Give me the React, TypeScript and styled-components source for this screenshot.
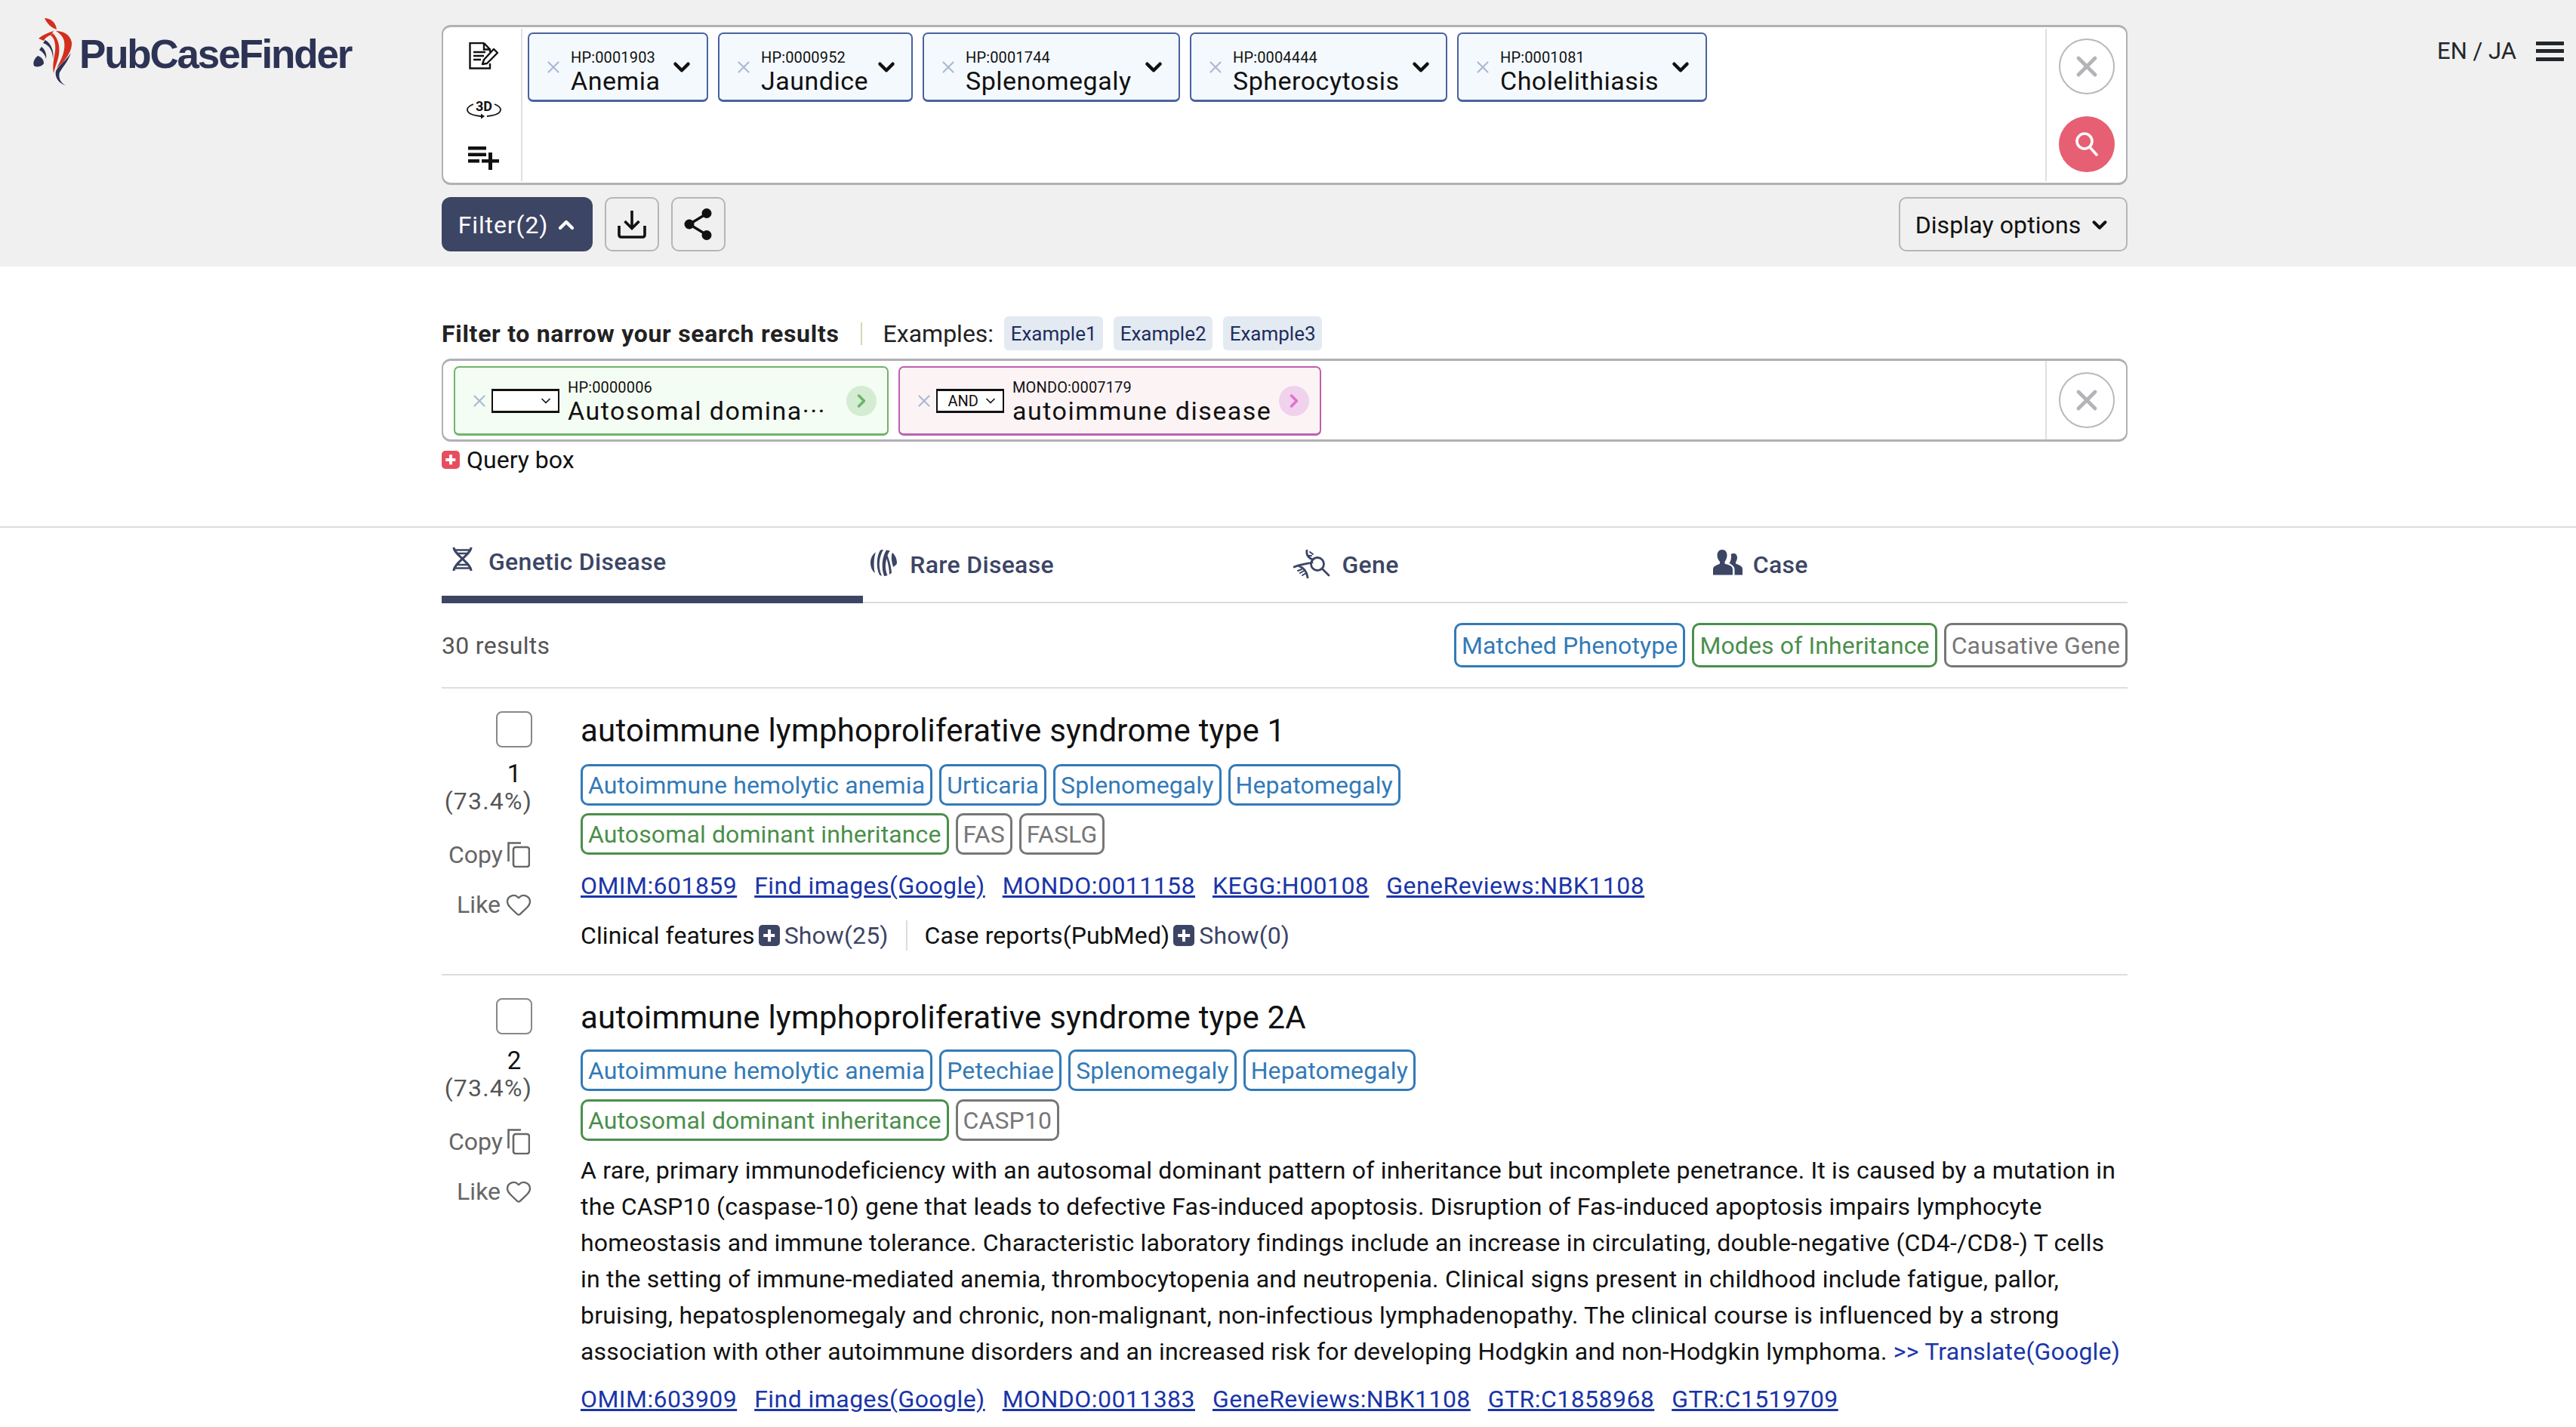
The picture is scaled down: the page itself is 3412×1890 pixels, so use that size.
import React from "react";
import styled, { createGlobalStyle } from "styled-components";
import { ChevronDown, ChevronUp, ChevronRight, X, Heart } from "lucide-react";

const FONT = `Roboto, "Noto Sans", sans-serif`;
const NAVY = "#3d4565";

const GlobalStyle = createGlobalStyle`
  html, body { margin: 0; padding: 0; background: #fff; }
  body { width: 3412px; height: 1890px; overflow: hidden; font-family: ${FONT}; font-size: 33px; color: #111; }
  * { box-sizing: border-box; }
`;

const Header = styled.header`
  display: flex;
  height: 353px;
  padding-top: 33px;
  background: #f0f0f0;
`;
const LogoSlot = styled.div`
  width: 585px;
  flex: none;
  display: flex;
  align-items: flex-start;
  padding: 0 0 0 44px;
  margin-top: -9px;
`;
const LogoText = styled.span`
  font-family: "Liberation Sans", sans-serif;
  font-weight: 700;
  font-size: 53px;
  letter-spacing: -2.2px;
  color: #2c3354;
  line-height: 62px;
  margin: 17px 0 0 9px;
`;
const SearchCol = styled.div`
  width: 2233px;
  flex: none;
`;
const SearchBox = styled.div`
  display: flex;
  height: 212px;
  background: #fff;
  border: solid #b0b0b5;
  border-width: 3px 2px;
  border-radius: 12px;
`;
const ToolCol = styled.div`
  width: 105px;
  flex: none;
  margin: 2px 0;
  border-right: 2px solid #e0e0e0;
  display: flex;
  flex-direction: column;
  align-items: center;
  justify-content: space-between;
  padding: 18px 0 14px 4px;
`;
const ChipArea = styled.div`
  flex: 1;
  display: flex;
  align-items: flex-start;
  gap: 13px;
  padding: 7px 0 0 7px;
`;
const ActionCol = styled.div`
  width: 107px;
  flex: none;
  margin: 2px 0;
  border-left: 2px solid #e0e0e0;
  display: flex;
  flex-direction: column;
  align-items: center;
  justify-content: space-between;
  padding: 13px 0 12px;
`;
const RoundButton = styled.div<{ $primary?: boolean }>`
  width: 74px;
  height: 74px;
  border-radius: 50%;
  display: flex;
  align-items: center;
  justify-content: center;
  background: ${(p) => (p.$primary ? "#e65f73" : "#fff")};
  border: ${(p) => (p.$primary ? "none" : "2px solid #b9b9bd")};
  color: #b4b4b8;
`;
const Chip = styled.div<{ $w: number; $border: string; $bg: string }>`
  width: ${(p) => p.$w}px;
  height: 92px;
  flex: none;
  display: flex;
  align-items: center;
  border: 2px solid ${(p) => p.$border};
  border-bottom-width: 3px;
  border-radius: 7px;
  background: ${(p) => p.$bg};
  padding-left: 19px;
`;
const ChipX = styled(X)`
  color: #adb9d3;
  flex: none;
`;
const ChipText = styled.div<{ $left: number; $top: number }>`
  margin-left: ${(p) => p.$left}px;
  margin-top: ${(p) => p.$top}px;
  flex: 1;
  min-width: 0;
`;
const ChipId = styled.div`
  font-size: 20px;
  line-height: 22px;
  letter-spacing: 0.15px;
`;
const ChipName = styled.div<{ $ls: number }>`
  font-size: 34px;
  line-height: 40px;
  letter-spacing: ${(p) => p.$ls}px;
  white-space: nowrap;
`;
const ChipChevron = styled(ChevronDown)`
  flex: none;
  margin-right: 16px;
  color: #111;
`;
const ToolRow = styled.div`
  display: flex;
  align-items: center;
  margin-top: 16px;
  height: 72px;
`;
const FilterButton = styled.div`
  width: 200px;
  height: 72px;
  padding: 2px 0 0 3px;
  border-radius: 12px;
  background: ${NAVY};
  color: #fff;
  display: flex;
  align-items: center;
  justify-content: center;
  gap: 8px;
  font-size: 32px;
  letter-spacing: 0.9px;
`;
const IconButton = styled.div`
  width: 72px;
  height: 72px;
  margin-left: 16px;
  border: 2px solid #b5b5ba;
  border-radius: 10px;
  display: flex;
  align-items: center;
  justify-content: center;
`;
const DisplayButton = styled.div`
  margin-left: auto;
  width: 303px;
  height: 72px;
  padding-top: 2px;
  border: 2px solid #b5b5ba;
  border-radius: 10px;
  display: flex;
  align-items: center;
  justify-content: center;
  gap: 10px;
  font-size: 32px;
  letter-spacing: 0.1px;
`;
const LangSlot = styled.div`
  flex: 1;
  display: flex;
  align-items: flex-start;
  justify-content: flex-end;
  gap: 26px;
  padding: 17px 16px 0 0;
  font-size: 31px;
  line-height: 36px;
  color: #23272b;
`;
const Burger = styled.div`
  width: 37px;
  height: 26px;
  margin-top: 5px;
  border-top: 5px solid #23272b;
  border-bottom: 5px solid #23272b;
  position: relative;
  &::after {
    content: "";
    position: absolute;
    left: 0;
    right: 0;
    top: 5px;
    height: 5px;
    background: #23272b;
  }
`;

const Main = styled.div`
  width: 2233px;
  margin-left: 585px;
`;
const FilterBand = styled.section`
  height: 346px;
  padding-top: 66px;
  border-bottom: 2px solid #ddd;
`;
const FilterHead = styled.div`
  display: flex;
  align-items: center;
  height: 45px;
`;
const FilterTitle = styled.div`
  font-weight: 700;
  font-size: 32px;
  color: #222;
  letter-spacing: 0.7px;
`;
const HeadSep = styled.div`
  width: 2px;
  height: 30px;
  margin: 0 28px;
  background: #cfdcae;
`;
const ExamplesLabel = styled.div`
  font-size: 32px;
  color: #222;
  margin-right: 14px;
`;
const ExampleChip = styled.div`
  width: 131px;
  height: 45px;
  margin-right: 14px;
  border-radius: 6px;
  background: #e3eaf2;
  color: #1f2d5c;
  font-size: 26px;
  display: flex;
  align-items: center;
  justify-content: center;
`;
const FilterBox = styled.div`
  display: flex;
  height: 110px;
  margin-top: 11px;
  border: solid #b0b0b5;
  border-width: 3px 2px;
  border-radius: 12px;
`;
const FilterChips = styled.div`
  flex: 1;
  display: flex;
  gap: 13px;
  padding: 7px 0 0 14px;
`;
const ClearCol = styled.div`
  width: 107px;
  flex: none;
  border-left: 2px solid #e0e0e0;
  display: flex;
  align-items: center;
  justify-content: center;
`;
const FakeSelect = styled.div`
  width: 90px;
  height: 32px;
  margin-left: 3px;
  flex: none;
  border: solid #111;
  border-width: 3px 2px;
  background: #fff;
  display: flex;
  align-items: center;
  justify-content: flex-end;
  gap: 6px;
  padding-right: 6px;
  font-size: 20px;
`;
const Circle = styled.div<{ $bg: string; $fg: string }>`
  width: 40px;
  height: 40px;
  flex: none;
  margin: 0 14px 0 10px;
  border-radius: 50%;
  background: ${(p) => p.$bg};
  color: ${(p) => p.$fg};
  display: flex;
  align-items: center;
  justify-content: center;
`;
const QueryRow = styled.div`
  display: flex;
  align-items: center;
  gap: 9px;
  margin-top: 4px;
  height: 40px;
  font-size: 32px;
`;
const PlusBox = styled.span<{ $bg: string; $size: number; $left?: number }>`
  width: ${(p) => p.$size}px;
  height: ${(p) => p.$size}px;
  margin-left: ${(p) => p.$left ?? 0}px;
  flex: none;
  border-radius: 5px;
  background: ${(p) => p.$bg};
  position: relative;
  display: inline-block;
  &::before, &::after {
    content: "";
    position: absolute;
    background: #fff;
    left: 50%;
    top: 50%;
    transform: translate(-50%, -50%);
  }
  &::before { width: 56%; height: 4px; }
  &::after { width: 4px; height: 56%; }
`;

const TabBar = styled.nav`
  display: flex;
  height: 100px;
  border-bottom: 2px solid #ddd;
`;
const Tab = styled.div<{ $active?: boolean; $pad: number; $gap: number }>`
  width: 25%;
  height: 100px;
  display: flex;
  align-items: flex-start;
  gap: ${(p) => p.$gap}px;
  padding: ${(p) => (p.$active ? "25px" : "29px")} 0 0 ${(p) => p.$pad}px;
  border-bottom: 10px solid ${(p) => (p.$active ? NAVY : "transparent")};
  color: ${NAVY};
  font-weight: 500;
  font-size: 32px;
  line-height: 40px;
  letter-spacing: 0.3px;
`;
const TabIcon = styled.svg`
  flex: none;
`;
const ResultsHead = styled.div`
  display: flex;
  align-items: center;
  justify-content: space-between;
  height: 113px;
  border-bottom: 2px solid #ddd;
  color: #555;
  font-size: 32px;
  letter-spacing: 0.3px;
`;
const LegendRow = styled.div`
  display: flex;
  gap: 9px;
`;
const Tag = styled.span<{ $color: string; $tall?: boolean }>`
  display: inline-flex;
  align-items: center;
  height: ${(p) => (p.$tall ? 59 : 55)}px;
  padding: 0 7px;
  border: 3px solid ${(p) => p.$color};
  border-radius: 10px;
  color: ${(p) => p.$color};
  font-size: 32px;
  white-space: nowrap;
  letter-spacing: 0.12px;
`;
const Result = styled.article<{ $last?: boolean }>`
  display: flex;
  padding-top: 30px;
  height: ${(p) => (p.$last ? "auto" : "380px")};
  border-bottom: ${(p) => (p.$last ? "none" : "2px solid #ddd")};
`;
const Side = styled.div`
  width: 184px;
  flex: none;
  padding-right: 64px;
  display: flex;
  flex-direction: column;
  align-items: flex-end;
`;
const CheckBox = styled.div`
  width: 48px;
  height: 48px;
  border: 2px solid #888;
  border-radius: 8px;
  background: #fff;
`;
const Rank = styled.div`
  width: 48px;
  text-align: center;
  margin-top: 16px;
  line-height: 37px;
  font-size: 33px;
`;
const Percent = styled.div`
  line-height: 36px;
  color: #555;
  font-size: 32px;
  letter-spacing: 1.2px;
`;
const SideAction = styled.div<{ $top: number }>`
  display: flex;
  align-items: center;
  gap: 6px;
  margin-top: ${(p) => p.$top}px;
  color: #666;
  font-size: 32px;
  line-height: 40px;
`;
const Content = styled.div`
  flex: 1;
  min-width: 0;
`;
const Title = styled.h2`
  margin: 0;
  font-weight: 400;
  font-size: 42px;
  line-height: 52px;
  letter-spacing: 0.2px;
  color: #111;
`;
const TagRow = styled.div<{ $top: number }>`
  display: flex;
  gap: 9px;
  margin-top: ${(p) => p.$top}px;
`;
const LinkRow = styled.div<{ $top: number }>`
  display: flex;
  gap: 23px;
  margin-top: ${(p) => p.$top}px;
  line-height: 48px;
`;
const ExtLink = styled.a`
  color: #1a35a8;
  text-decoration: underline;
  font-size: 32px;
  letter-spacing: 0.45px;
`;
const InfoRow = styled.div`
  display: flex;
  align-items: center;
  margin-top: 18px;
  height: 48px;
  font-size: 32px;
  letter-spacing: 0.1px;
`;
const ShowLink = styled.span`
  color: ${NAVY};
  margin-left: 6px;
`;
const InfoSep = styled.div`
  width: 2px;
  height: 40px;
  margin: 0 22px 0 24px;
  background: #ddd;
`;
const Summary = styled.p`
  margin: 15px 0 0;
  font-size: 32px;
  line-height: 48px;
  white-space: nowrap;
  letter-spacing: 0.2px;
`;
const Translate = styled.span`
  color: #1a35a8;
`;
const CopyGlyph = styled.svg`
  margin-right: 3px;
`;

function Logo() {
  return (
    <svg width="52" height="90" viewBox="44 24 52 90">
      <g fill="#d42e1c">
        <path d="M59 24C66 24 74 29 75 39C68 37 62 31 59 24Z" />
        <path d="M51 51C57 46 64 43 71 41L68 46C63 48 60 50 58 54Z" />
        <path d="M70 44C76 50 80 60 78 72C77 80 73 88 71 97C69 86 72 76 73 68C74 58 72 50 67 47Z" />
        <path d="M74 41C84 41 93 46 95 56C96 66 88 80 75 90C82 78 87 66 85 55C84 49 80 45 74 41Z" />
      </g>
      <g fill="#2c3354">
        <path d="M60 53C68 58 72 68 70 78C70 68 66 60 57 57Z" />
        <path d="M55 62C60 66 62 72 61 78C60 73 57 69 52 66Z" />
        <path d="M50 74C56 76 58 80 58 84C56 88 48 90 45 87C43 83 46 77 50 74Z" />
        <path d="M94 70C90 82 82 90 79 96C77 102 80 110 87 113C78 111 72 102 74 94C78 86 88 80 94 70Z" />
      </g>
    </svg>
  );
}

function EditIcon() {
  return (
    <svg width="40" height="36" viewBox="0 0 40 36" fill="none" stroke="#111">
      <path d="M20 1H1.5V34.5H28V28M20 1V9.5H28V13M20 1L28 9.5" strokeWidth="2.4" />
      <path d="M6 13H22M6 18H20M6 23H16" strokeWidth="2.6" />
      <path d="M18 29L20 23L33 9L38 14L24 28Z" strokeWidth="2.4" strokeLinejoin="round" />
    </svg>
  );
}

function ThreeDIcon() {
  return (
    <svg width="46" height="30" viewBox="0 -4 46 30" fill="none" stroke="#111" strokeWidth="1.8">
      <text x="23" y="15" textAnchor="middle" fontFamily="Roboto, sans-serif" fontWeight="700" fontSize="18" fill="#111" stroke="none">
        3D
      </text>
      <path d="M9 6C4 8 1 10 1 13C1 18 9 21 19 22" />
      <path d="M37 6C42 8 45 10 45 13C45 18 37 21 27 22" />
      <path d="M19 18.5L24 22L19 25.5Z" fill="#111" stroke="none" />
    </svg>
  );
}

function ListPlusIcon() {
  return (
    <svg width="42" height="32" viewBox="0 0 42 32" fill="#111">
      <rect x="0" y="0" width="24" height="4.5" />
      <rect x="0" y="8.5" width="24" height="4.5" />
      <rect x="0" y="17" width="15" height="4.5" />
      <rect x="18" y="17" width="23" height="4.5" />
      <rect x="27" y="8" width="5" height="23" />
    </svg>
  );
}

function SearchGlyph() {
  return (
    <svg width="34" height="34" viewBox="0 0 34 34" fill="none" stroke="#fff" strokeWidth="3.6">
      <circle cx="14" cy="13" r="10" />
      <path d="M21 21L31 32" />
    </svg>
  );
}

function DownloadIcon() {
  return (
    <svg width="38" height="38" viewBox="0 0 38 38" fill="none" stroke="#111" strokeWidth="3.6">
      <path d="M19 1V24M9.5 15L19 24.5L28.5 15" />
      <path d="M2 21V33C2 35 3 36 5 36H33C35 36 36 35 36 33V21" />
    </svg>
  );
}

function ShareIcon() {
  return (
    <svg width="40" height="44" viewBox="0 0 40 44" fill="#111" stroke="#111">
      <path d="M31 8L8 22L31 36" fill="none" strokeWidth="3.4" />
      <circle cx="31" cy="7.5" r="6.5" stroke="none" />
      <circle cx="8" cy="22" r="6.5" stroke="none" />
      <circle cx="31" cy="36.5" r="6.5" stroke="none" />
    </svg>
  );
}

function DnaIcon() {
  return (
    <TabIcon width="27" height="33" viewBox="0 0 27 33" fill="none" stroke={NAVY} strokeWidth="3">
      <path d="M2 1C2 10 25 22 25 32" />
      <path d="M25 1C25 10 2 22 2 32" />
      <path d="M3 4.5H24M7 9H20M7 24H20M3 28.5H24" strokeWidth="2.4" />
    </TabIcon>
  );
}

function RareIcon() {
  return (
    <TabIcon width="35" height="35" viewBox="0 0 35 35" fill={NAVY}>
      <path d="M7 3.5C3 6 0 11 0 17.5C0 23 2 28 6 31C4 25 4 11 7 3.5Z" />
      <path d="M13 .8C8 8 7 24 12 33.5C13 34 14 34.5 15 34.5C10 24 11 10 17 0C15.5 0 14 .2 13 .8Z" />
      <path d="M21 .4C15 10 14 24 18 35C19.5 35 21 34.5 22.5 34C19 26 19.5 18 21.5 12C23.5 19 25 27 25 33C26 32.5 27 31.5 28 30.5C27.5 22 24.5 12 22.5 8C23.5 5 24.5 3 26 1.5C24.5 1 23 .6 21 .4Z" />
      <path d="M29 4C27 8 27.5 14 30 23C32.5 21 35 20 35 17.5C35 12 32.5 7 29 4Z" />
    </TabIcon>
  );
}

function GeneIcon() {
  return (
    <TabIcon width="49" height="38" viewBox="0 0 49 38" fill="none" stroke={NAVY} strokeWidth="2.8" strokeLinecap="round">
      <circle cx="32" cy="19" r="8.5" />
      <path d="M38 25L47 34" />
      <path d="M18 1C17 7 20 11 26 13" />
      <path d="M1 23C8 20 16 19 25 17" />
      <path d="M19 37C18 30 14 24 8 22" />
      <path d="M22 3L26 6M19 8L24 8M11 26L6 28M14 28L9 31M17 31L12 34" strokeWidth="2" />
    </TabIcon>
  );
}

function CaseIcon() {
  return (
    <TabIcon width="39" height="34" viewBox="0 0 39 34" fill={NAVY}>
      <path d="M12 0C16.5 0 18.5 3.5 18.5 7.5C18.5 11 17 14 15.5 16V18.5C20 20.5 26 21 26 26V33.5H0V26C0 21 6 20.5 9 18.5V16C7 14 5.5 11 5.5 7.5C5.5 3.5 8 0 12 0Z" />
      <path d="M27.5 5C30.5 5 32 7.5 32 10.5C32 13 31 15 30 16.5V18.5C33 20 39 21 39 25.5V33.5H28.5V26C28.5 21.5 24 19.5 21.5 18C23 16 24 13 24 9.5C24 8 24 6.5 23.5 6C24.5 5.5 26 5 27.5 5Z" />
    </TabIcon>
  );
}

function CopyIcon() {
  return (
    <CopyGlyph width="30" height="34" viewBox="0 0 30 34" fill="none" stroke="#666" strokeWidth="2.6">
      <rect x="8" y="7" width="21" height="26" rx="3" />
      <path d="M1.5 26V1.5H18" />
    </CopyGlyph>
  );
}

const searchTerms = [
  { id: "HP:0001903", name: "Anemia", w: 239 },
  { id: "HP:0000952", name: "Jaundice", w: 258 },
  { id: "HP:0001744", name: "Splenomegaly", w: 341 },
  { id: "HP:0004444", name: "Spherocytosis", w: 341 },
  { id: "HP:0001081", name: "Cholelithiasis", w: 331 },
];

const BLUE = "#337ab7";
const GREEN = "#4b8f4b";
const GREY = "#777";

const Links = ({ items, top }: { items: string[]; top: number }) => (
  <LinkRow $top={top}>
    {items.map((item) => (
      <ExtLink key={item} href="#">
        {item}
      </ExtLink>
    ))}
  </LinkRow>
);

const SideBlock = ({ rank, pct }: { rank: number; pct: string }) => (
  <Side>
    <CheckBox />
    <Rank>{rank}</Rank>
    <Percent>{pct}</Percent>
    <SideAction $top={33}>
      Copy
      <CopyIcon />
    </SideAction>
    <SideAction $top={26}>
      Like
      <Heart size={36} strokeWidth={1.6} />
    </SideAction>
  </Side>
);

export default function App() {
  return (
    <>
      <GlobalStyle />
      <Header>
        <LogoSlot>
          <Logo />
          <LogoText>PubCaseFinder</LogoText>
        </LogoSlot>
        <SearchCol>
          <SearchBox>
            <ToolCol>
              <EditIcon />
              <ThreeDIcon />
              <ListPlusIcon />
            </ToolCol>
            <ChipArea>
              {searchTerms.map((t) => (
                <Chip key={t.id} $w={t.w} $border="#4a62a0" $bg="#f4f9fe">
                  <ChipX size={26} strokeWidth={2} />
                  <ChipText $left={10} $top={14}>
                    <ChipId>{t.id}</ChipId>
                    <ChipName $ls={0.5}>{t.name}</ChipName>
                  </ChipText>
                  <ChipChevron size={34} strokeWidth={3.2} />
                </Chip>
              ))}
            </ChipArea>
            <ActionCol>
              <RoundButton>
                <X size={44} strokeWidth={2.6} />
              </RoundButton>
              <RoundButton $primary>
                <SearchGlyph />
              </RoundButton>
            </ActionCol>
          </SearchBox>
          <ToolRow>
            <FilterButton>
              Filter(2)
              <ChevronUp size={32} strokeWidth={3.2} />
            </FilterButton>
            <IconButton>
              <DownloadIcon />
            </IconButton>
            <IconButton>
              <ShareIcon />
            </IconButton>
            <DisplayButton>
              Display options
              <ChevronDown size={30} strokeWidth={3.2} />
            </DisplayButton>
          </ToolRow>
        </SearchCol>
        <LangSlot>
          EN / JA
          <Burger />
        </LangSlot>
      </Header>

      <FilterBand>
        <Main>
          <FilterHead>
            <FilterTitle>Filter to narrow your search results</FilterTitle>
            <HeadSep />
            <ExamplesLabel>Examples:</ExamplesLabel>
            <ExampleChip>Example1</ExampleChip>
            <ExampleChip>Example2</ExampleChip>
            <ExampleChip>Example3</ExampleChip>
          </FilterHead>
          <FilterBox>
            <FilterChips>
              <Chip $w={576} $border="#6fb56a" $bg="#f4fdf3">
                <ChipX size={26} strokeWidth={2} />
                <FakeSelect>
                  <ChevronDown size={20} strokeWidth={2} />
                </FakeSelect>
                <ChipText $left={11} $top={5}>
                  <ChipId>HP:0000006</ChipId>
                  <ChipName $ls={1.5}>Autosomal domina···</ChipName>
                </ChipText>
                <Circle $bg="#d3ecd2" $fg="#6db36a">
                  <ChevronRight size={28} strokeWidth={3} />
                </Circle>
              </Chip>
              <Chip $w={560} $border="#bb60b0" $bg="#fcf3f5">
                <ChipX size={26} strokeWidth={2} />
                <FakeSelect>
                  AND
                  <ChevronDown size={20} strokeWidth={2} />
                </FakeSelect>
                <ChipText $left={11} $top={5}>
                  <ChipId>MONDO:0007179</ChipId>
                  <ChipName $ls={1.5}>autoimmune disease</ChipName>
                </ChipText>
                <Circle $bg="#f0d2ec" $fg="#e070d0">
                  <ChevronRight size={28} strokeWidth={3} />
                </Circle>
              </Chip>
            </FilterChips>
            <ClearCol>
              <RoundButton>
                <X size={44} strokeWidth={2.6} />
              </RoundButton>
            </ClearCol>
          </FilterBox>
          <QueryRow>
            <PlusBox $bg="#e84d5f" $size={24} />
            Query box
          </QueryRow>
        </Main>
      </FilterBand>

      <Main>
        <TabBar>
          <Tab $active $pad={14} $gap={21}>
            <DnaIcon />
            Genetic Disease
          </Tab>
          <Tab $pad={10} $gap={17}>
            <RareIcon />
            Rare Disease
          </Tab>
          <Tab $pad={11} $gap={16}>
            <GeneIcon />
            Gene
          </Tab>
          <Tab $pad={9} $gap={14}>
            <CaseIcon />
            Case
          </Tab>
        </TabBar>
        <ResultsHead>
          30 results
          <LegendRow>
            <Tag $tall $color={BLUE}>Matched Phenotype</Tag>
            <Tag $tall $color={GREEN}>Modes of Inheritance</Tag>
            <Tag $tall $color={GREY}>Causative Gene</Tag>
          </LegendRow>
        </ResultsHead>

        <Result>
          <SideBlock rank={1} pct="(73.4%)" />
          <Content>
            <Title>autoimmune lymphoproliferative syndrome type 1</Title>
            <TagRow $top={18}>
              <Tag $color={BLUE}>Autoimmune hemolytic anemia</Tag>
              <Tag $color={BLUE}>Urticaria</Tag>
              <Tag $color={BLUE}>Splenomegaly</Tag>
              <Tag $color={BLUE}>Hepatomegaly</Tag>
            </TagRow>
            <TagRow $top={10}>
              <Tag $color={GREEN}>Autosomal dominant inheritance</Tag>
              <Tag $color={GREY}>FAS</Tag>
              <Tag $color={GREY}>FASLG</Tag>
            </TagRow>
            <Links
              top={17}
              items={["OMIM:601859", "Find images(Google)", "MONDO:0011158", "KEGG:H00108", "GeneReviews:NBK1108"]}
            />
            <InfoRow>
              Clinical features
              <PlusBox $bg={NAVY} $size={28} $left={5} />
              <ShowLink>Show(25)</ShowLink>
              <InfoSep />
              Case reports(PubMed)
              <PlusBox $bg={NAVY} $size={28} $left={5} />
              <ShowLink>Show(0)</ShowLink>
            </InfoRow>
          </Content>
        </Result>

        <Result $last>
          <SideBlock rank={2} pct="(73.4%)" />
          <Content>
            <Title>autoimmune lymphoproliferative syndrome type 2A</Title>
            <TagRow $top={16}>
              <Tag $color={BLUE}>Autoimmune hemolytic anemia</Tag>
              <Tag $color={BLUE}>Petechiae</Tag>
              <Tag $color={BLUE}>Splenomegaly</Tag>
              <Tag $color={BLUE}>Hepatomegaly</Tag>
            </TagRow>
            <TagRow $top={11}>
              <Tag $color={GREEN}>Autosomal dominant inheritance</Tag>
              <Tag $color={GREY}>CASP10</Tag>
            </TagRow>
            <Summary>
              A rare, primary immunodeficiency with an autosomal dominant pattern of inheritance but incomplete penetrance. It is caused by a mutation in
              <br />
              the CASP10 (caspase-10) gene that leads to defective Fas-induced apoptosis. Disruption of Fas-induced apoptosis impairs lymphocyte
              <br />
              homeostasis and immune tolerance. Characteristic laboratory findings include an increase in circulating, double-negative (CD4-/CD8-) T cells
              <br />
              in the setting of immune-mediated anemia, thrombocytopenia and neutropenia. Clinical signs present in childhood include fatigue, pallor,
              <br />
              bruising, hepatosplenomegaly and chronic, non-malignant, non-infectious lymphadenopathy. The clinical course is influenced by a strong
              <br />
              association with other autoimmune disorders and an increased risk for developing Hodgkin and non-Hodgkin lymphoma. <Translate>&gt;&gt; Translate(Google)</Translate>
            </Summary>
            <Links
              top={15}
              items={["OMIM:603909", "Find images(Google)", "MONDO:0011383", "GeneReviews:NBK1108", "GTR:C1858968", "GTR:C1519709"]}
            />
          </Content>
        </Result>
      </Main>
    </>
  );
}
